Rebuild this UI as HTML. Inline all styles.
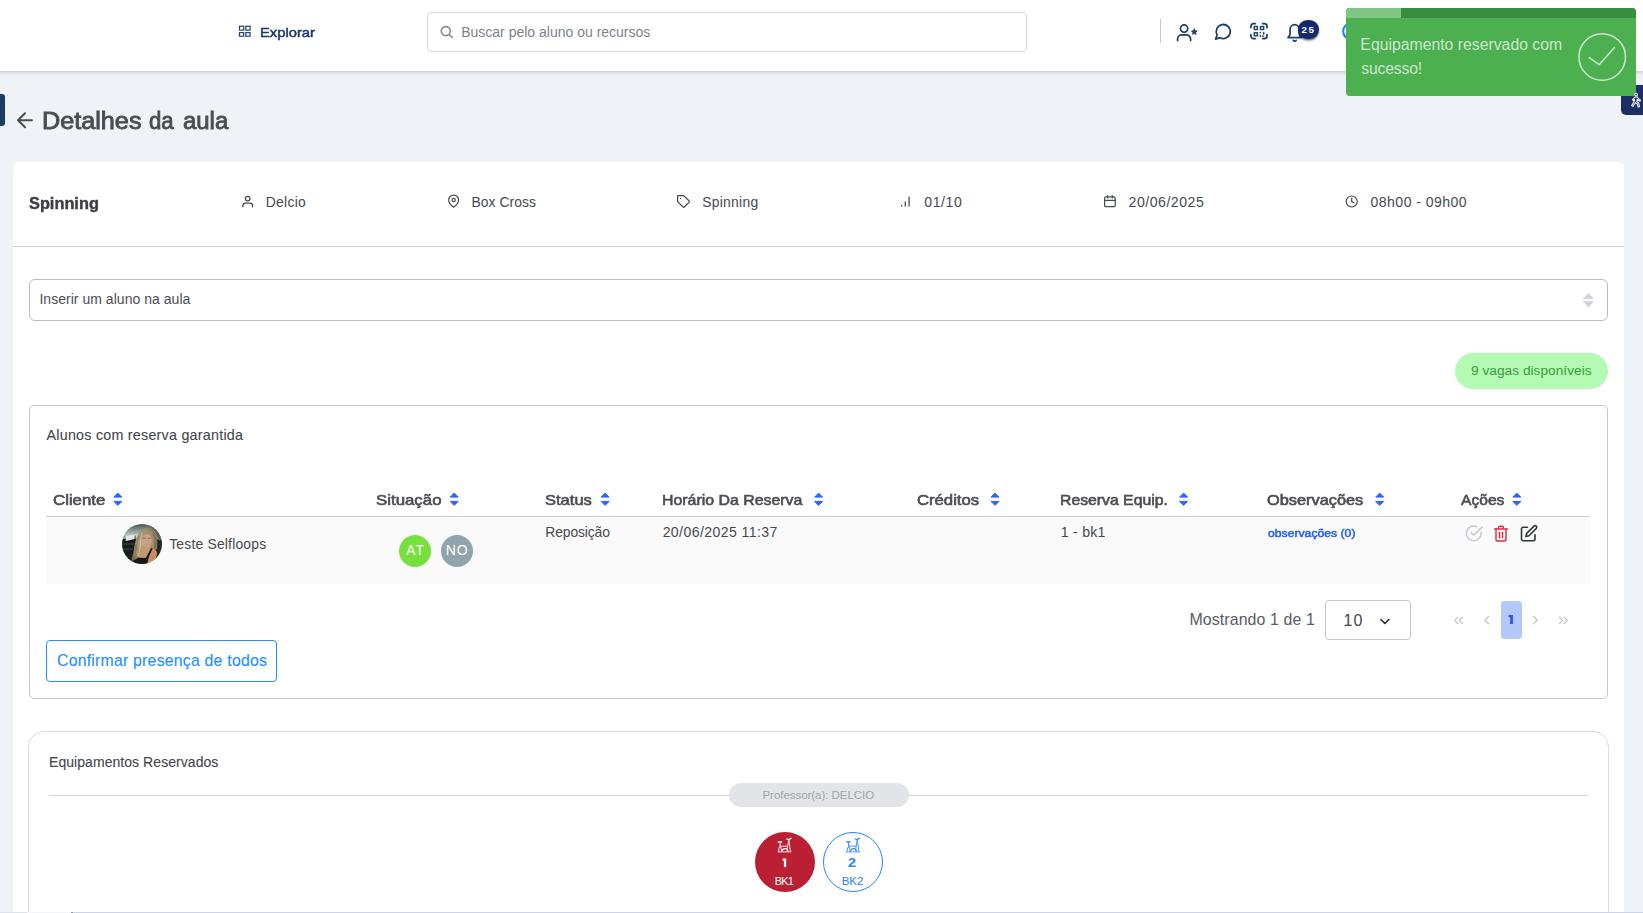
<!DOCTYPE html>
<html lang="pt-br">
<head>
<meta charset="utf-8">
<title>Detalhes da aula</title>
<style>
*{box-sizing:border-box;margin:0;padding:0}
html,body{width:1643px;height:913px;overflow:hidden}
body{background:#eff2f7;font-family:"Liberation Sans",sans-serif;color:#464a50;position:relative}
.abs{position:absolute}
.t{position:absolute;white-space:nowrap;line-height:1}
#ico{position:absolute;left:0;top:0;width:1643px;height:913px;z-index:3;pointer-events:none}
#ico2{position:absolute;left:0;top:0;width:1643px;height:913px;z-index:13;pointer-events:none}
#hdr{left:-20px;top:0;width:1683px;height:71px;background:#fff;box-shadow:0 2px 3px rgba(0,0,0,.14)}
#search{left:427px;top:12px;width:600px;height:40px;border:1px solid #d6d9dd;border-radius:4px;background:#fff}
#vdiv{left:1160px;top:19px;width:1px;height:24px;background:#c6c8cc}
#badge{left:1297.5px;top:20px;width:21.5px;height:18.5px;border-radius:9.5px;background:#15296f;box-shadow:0 1.5px 2px rgba(0,0,0,.55);z-index:4}
#toast{left:1346px;top:7.5px;width:290px;height:88.5px;background:#4caf50;border-radius:4px;overflow:hidden;z-index:11}
#tbar{left:0;top:0;width:290px;height:10px;background:#388e3c}
#tbar2{left:0;top:0;width:54.5px;height:10px;background:#81c784}
#ltab{left:0;top:93.7px;width:4.8px;height:32px;background:#1b3d63;border-radius:0 3px 3px 0}
#rtab{left:1621px;top:85px;width:24px;height:30px;background:#1c2e62;border-radius:5px 0 0 5px;z-index:10}
#card{left:13px;top:162px;width:1611px;height:760px;background:#fff;border-radius:6px}
#hr1{left:13px;top:246px;width:1611px;height:1px;background:#cdcfd3}
#sel{left:29px;top:279px;width:1579px;height:42px;border:1px solid #b8bcc8;border-radius:6px;background:#fff}
#vagas{left:1455px;top:353px;width:153px;height:36px;border-radius:18px;background:#b5fab4}
#box1{left:29px;top:405px;width:1579px;height:294px;border:1px solid #c6c8cd;border-radius:5px;background:#fff}
#thline{left:46px;top:516px;width:1544px;height:1px;background:#cbcdd1}
#row{left:46px;top:517px;width:1544px;height:67px;background:#fafafa}
.circ{position:absolute;border-radius:50%}
#ddl{left:1325px;top:600px;width:86px;height:40px;border:1px solid #c4c6ca;border-radius:4px;background:#fff}
#pg1{left:1501px;top:601px;width:21px;height:38px;border-radius:4px;background:#b4c8fa}
#btn{left:46px;top:640px;width:231px;height:42px;border:1px solid #2291fa;border-radius:4px;background:#fff}
#box2{left:28px;top:731px;width:1581px;height:230px;border:1px solid #d9dbe0;border-radius:16px;background:#fff}
#hr2{left:49px;top:795px;width:1539px;height:1px;background:#d3d5da}
#pill{left:729px;top:783px;width:180px;height:24px;border-radius:12px;background:#e3e4e7}
#botline{left:0;top:911.6px;width:1643px;height:1.4px;background:linear-gradient(90deg,#dde2ef 0,#dde2ef 27px,#f3f5fa 27px,#f3f5fa 71px,#8d96b6 71px,#8d96b6 72.5px,#cbd4e9 72.5px);z-index:20}
</style>
</head>
<body>
<div id="hdr" class="abs"></div>
<div id="search" class="abs"></div>
<div id="vdiv" class="abs"></div>
<div id="ltab" class="abs"></div>
<div id="card" class="abs"></div>
<div id="hr1" class="abs"></div>
<div id="sel" class="abs"></div>
<div id="vagas" class="abs"></div>
<div id="box1" class="abs"></div>
<div id="thline" class="abs"></div>
<div id="row" class="abs"></div>
<div class="circ" style="left:399px;top:535px;width:32px;height:32px;background:#77e03f"></div>
<div class="circ" style="left:441px;top:535px;width:32px;height:32px;background:#90a4ae"></div>
<div id="ddl" class="abs"></div>
<div id="pg1" class="abs"></div>
<div id="btn" class="abs"></div>
<div id="box2" class="abs"></div>
<div id="hr2" class="abs"></div>
<div id="pill" class="abs"></div>
<div class="circ" style="left:755px;top:832px;width:60px;height:60px;background:#ba1f33"></div>
<div class="circ" style="left:823px;top:832px;width:60px;height:60px;background:#fff;border:1.4px solid #2482ff"></div>
<div id="badge" class="abs"></div>
<div id="toast" class="abs"><div id="tbar" class="abs"></div><div id="tbar2" class="abs"></div></div>
<div id="rtab" class="abs"></div>
<div id="botline" class="abs"></div>
<span class="t" style="left:259.75px;top:25.80px;font-size:13.6px;color:#1c3a61;transform:scaleX(1.0866);transform-origin:0 0;-webkit-text-stroke:.5px #1c3a61">Explorar</span>
<span class="t" style="left:461.21px;top:25.00px;font-size:14px;color:#7d838c">Buscar pelo aluno ou recursos</span>
<span class="t" style="left:41.67px;top:110.00px;font-size:23px;color:#4b4c52;transform:scaleX(1.0959);transform-origin:0 0;-webkit-text-stroke:.85px #4b4c52">Detalhes</span>
<span class="t" style="left:148.75px;top:110.00px;font-size:23px;color:#4b4c52;transform:scaleX(0.9644);transform-origin:0 0;-webkit-text-stroke:.85px #4b4c52">da</span>
<span class="t" style="left:182.79px;top:110.00px;font-size:23px;color:#4b4c52;transform:scaleX(1.0398);transform-origin:0 0;-webkit-text-stroke:.85px #4b4c52">aula</span>
<span class="t" style="left:29.30px;top:195.90px;font-size:15.8px;color:#3d3e44;font-weight:700;transform:scaleX(1.0341);transform-origin:0 0;-webkit-text-stroke:.4px #3d3e44">Spinning</span>
<span class="t" style="left:265.81px;top:196.00px;font-size:13.9px;color:#464a50;letter-spacing:0.265px">Delcio</span>
<span class="t" style="left:471.51px;top:196.00px;font-size:13.9px;color:#464a50;letter-spacing:0.039px">Box Cross</span>
<span class="t" style="left:702.27px;top:196.00px;font-size:13.9px;color:#464a50;letter-spacing:0.259px">Spinning</span>
<span class="t" style="left:924.26px;top:195.00px;font-size:14.1px;color:#464a50;letter-spacing:0.552px">01/10</span>
<span class="t" style="left:1128.54px;top:195.00px;font-size:14.1px;color:#464a50;letter-spacing:0.518px">20/06/2025</span>
<span class="t" style="left:1370.56px;top:195.00px;font-size:14.1px;color:#464a50;letter-spacing:0.437px">08h00 - 09h00</span>
<span class="t" style="left:39.41px;top:291.90px;font-size:14px;color:#4a4d55;letter-spacing:0.031px">Inserir um aluno na aula</span>
<span class="t" style="left:1470.96px;top:364.30px;font-size:13.7px;color:#33a038;letter-spacing:0.024px">9 vagas disponíveis</span>
<span class="t" style="left:46.50px;top:428.10px;font-size:14.3px;color:#43464c;letter-spacing:0.242px;-webkit-text-stroke:.1px #43464c">Alunos com reserva garantida</span>
<span class="t" style="left:53.15px;top:492.80px;font-size:14.6px;color:#4b4d53;transform:scaleX(1.1528);transform-origin:0 0;-webkit-text-stroke:.6px #4b4d53">Cliente</span>
<span class="t" style="left:376.41px;top:492.80px;font-size:14.6px;color:#4b4d53;transform:scaleX(1.1533);transform-origin:0 0;-webkit-text-stroke:.6px #4b4d53">Situação</span>
<span class="t" style="left:545.42px;top:492.80px;font-size:14.6px;color:#4b4d53;transform:scaleX(1.1320);transform-origin:0 0;-webkit-text-stroke:.6px #4b4d53">Status</span>
<span class="t" style="left:661.90px;top:492.80px;font-size:14.6px;color:#4b4d53;transform:scaleX(1.0887);transform-origin:0 0;-webkit-text-stroke:.6px #4b4d53">Horário Da Reserva</span>
<span class="t" style="left:916.76px;top:492.80px;font-size:14.6px;color:#4b4d53;transform:scaleX(1.1427);transform-origin:0 0;-webkit-text-stroke:.6px #4b4d53">Créditos</span>
<span class="t" style="left:1060.31px;top:492.80px;font-size:14.6px;color:#4b4d53;transform:scaleX(1.0807);transform-origin:0 0;-webkit-text-stroke:.6px #4b4d53">Reserva Equip.</span>
<span class="t" style="left:1267.37px;top:492.80px;font-size:14.6px;color:#4b4d53;transform:scaleX(1.1195);transform-origin:0 0;-webkit-text-stroke:.6px #4b4d53">Observações</span>
<span class="t" style="left:1460.84px;top:492.80px;font-size:14.6px;color:#4b4d53;transform:scaleX(1.0698);transform-origin:0 0;-webkit-text-stroke:.6px #4b4d53">Ações</span>
<span class="t" style="left:169.18px;top:538.00px;font-size:13.9px;color:#464a50;letter-spacing:0.199px">Teste Selfloops</span>
<span class="t" style="left:406.35px;top:544.30px;font-size:13.8px;color:#fff;letter-spacing:0.876px">AT</span>
<span class="t" style="left:445.71px;top:543.30px;font-size:14px;color:#fff;letter-spacing:0.902px">NO</span>
<span class="t" style="left:545.31px;top:525.90px;font-size:13.9px;color:#464a50;letter-spacing:-0.129px">Reposição</span>
<span class="t" style="left:662.64px;top:524.90px;font-size:14.1px;color:#464a50;letter-spacing:0.407px">20/06/2025 11:37</span>
<span class="t" style="left:1060.82px;top:524.90px;font-size:14.1px;color:#464a50;letter-spacing:0.241px">1 - bk1</span>
<span class="t" style="left:1268.22px;top:527.80px;font-size:11.4px;color:#2460fa;transform:scaleX(1.0707);transform-origin:0 0;-webkit-text-stroke:.5px #2460fa">observações (0)</span>
<span class="t" style="left:1189.46px;top:612.30px;font-size:15.9px;color:#585c63;letter-spacing:0.109px">Mostrando 1 de 1</span>
<span class="t" style="left:1343.40px;top:613.00px;font-size:16px;color:#42454b;letter-spacing:1.202px">10</span>
<span class="t" style="left:57.01px;top:652.90px;font-size:15.8px;color:#1e90ff;letter-spacing:0.236px;-webkit-text-stroke:.12px #1e90ff">Confirmar presença de todos</span>
<span class="t" style="left:49.01px;top:755.10px;font-size:14px;color:#43464c;letter-spacing:0.056px;-webkit-text-stroke:.1px #43464c">Equipamentos Reservados</span>
<span class="t" style="left:762.50px;top:790.00px;font-size:11.5px;color:#a2a3a6;letter-spacing:-0.046px">Professor(a): DELCIO</span>
<span class="t" style="left:774.84px;top:876.10px;font-size:11px;color:#fff;letter-spacing:-0.843px">BK1</span>
<span class="t" style="left:848.34px;top:857.10px;font-size:12px;color:#2a80ff;font-weight:700;transform:scaleX(1.2333);transform-origin:0 0">2</span>
<span class="t" style="left:841.69px;top:875.10px;font-size:11.6px;color:#2a80ff;letter-spacing:-0.125px">BK2</span>
<span class="t" style="left:1301.59px;top:24.80px;font-size:9.8px;color:#fff;font-weight:700;letter-spacing:1.350px;z-index:5">25</span>
<span class="t" style="left:1360.37px;top:37.00px;font-size:15.8px;color:#cbe8cc;letter-spacing:-0.006px;z-index:12">Equipamento reservado com</span>
<span class="t" style="left:1361.35px;top:61.00px;font-size:15.8px;color:#cbe8cc;letter-spacing:-0.225px;z-index:12">sucesso!</span>
<svg id="ico" viewBox="0 0 1643 913" fill="none" stroke-linecap="round" stroke-linejoin="round">
<defs>
<clipPath id="avc"><circle cx="142" cy="544" r="20"/></clipPath>
<radialGradient id="gHair" cx="0.45" cy="0.45" r="0.65"><stop offset="0" stop-color="#b9a983"/><stop offset="0.65" stop-color="#a08e69"/><stop offset="1" stop-color="#6e5f3e"/></radialGradient>
<linearGradient id="gCeil" x1="0" y1="0" x2="0" y2="1"><stop offset="0" stop-color="#2b3232"/><stop offset="0.3" stop-color="#6e7878"/><stop offset="0.7" stop-color="#b4bdbc"/><stop offset="1" stop-color="#7d8786"/></linearGradient>
<filter id="avb" x="-10%" y="-10%" width="120%" height="120%"><feGaussianBlur stdDeviation=".55"/></filter>
</defs>
<!-- explorar grid -->
<g stroke="#234569" stroke-width="1.2" stroke-linejoin="miter">
<rect x="239.450" y="26.250" width="4.250" height="3.850"/><rect x="245.800" y="26.250" width="4.300" height="3.850"/>
<rect x="239.450" y="32.640" width="4.250" height="3.560"/><rect x="245.800" y="32.640" width="4.300" height="3.560"/>
</g>
<!-- search -->
<g stroke="#858b94" stroke-width="1.6"><circle cx="445.8" cy="31.1" r="4.5"/><path d="M449.2 34.6L452.3 37.5"/></g>
<!-- header icons -->
<g stroke="#1e4068" stroke-width="1.75">
<circle cx="1184.1" cy="28.6" r="3.65"/>
<path d="M1177.6 40.6v-1.6a4.2 4.2 0 0 1 4.2-4.2h4.6a4.2 4.2 0 0 1 4.2 4.2v1.6"/>
<path d="M1194.3 28.7l.9 1.9 2.1.3-1.5 1.5.35 2.1-1.85-1-1.85 1 .35-2.1-1.5-1.5 2.1-.3z" fill="#1e4068" stroke-width=".6"/>
<!-- chat -->
<path d="M1215.6 39.2l1.5-4.4a7 7 0 1 1 2.9 2.9z"/>
<!-- qr -->
<path d="M1250.9 27.6v-1.2a2.7 2.7 0 0 1 2.7-2.700h1.6M1262.7 23.700h1.600a2.7 2.7 0 0 1 2.7 2.7v1.2M1267 34.700v1.200a2.7 2.7 0 0 1-2.7 2.7h-1.6M1255.2 38.600h-1.600a2.7 2.7 0 0 1-2.7-2.7v-1.2"/>
<g stroke-width="1.4" stroke-linejoin="miter"><rect x="1254.3" y="26.500" width="3.1" height="3"/><rect x="1260.5" y="26.500" width="3.1" height="3"/><rect x="1254.3" y="32.800" width="3.1" height="3"/>
<path d="M1260.3 32.500v.2M1263.7 32.500v1.600M1260.3 35.400v.8M1262.2 36.100h1.500"/></g>
<!-- bell -->
<path d="M1288 37.5h13.4c-1.5-1-2.1-2.8-2.1-4.6v-3.6a4.6 4.6 0 0 0-9.2 0v3.6c0 1.8-.6 3.6-2.1 4.6z"/>
<path d="M1293.3 40.3a1.6 1.6 0 0 0 2.8 0"/>
</g>
<!-- partial blue circle behind toast -->
<circle cx="1351.500" cy="31.400" r="8.300" stroke="#1e88e5" stroke-width="2.200"/>
<!-- back arrow -->
<path d="M31.900 120.200H18M25 113.200l-7 7 7 7" stroke="#4b4c52" stroke-width="1.950"/>
<!-- row1 icons -->
<g stroke="#464a50" stroke-width="1.2">
<circle cx="247.7" cy="198.6" r="2.3"/><path d="M242.9 206.8v-1a2.6 2.6 0 0 1 2.6-2.6h4.4a2.6 2.6 0 0 1 2.6 2.6v1"/>
<g transform="translate(447.05 194.55) scale(.55)" stroke-width="2.2"><path d="M21 10c0 7-9 13-9 13s-9-6-9-13a9 9 0 0 1 18 0z"/><circle cx="12" cy="10" r="3"/></g>
<g transform="translate(676.4 194.4) scale(.61 .6)" stroke-width="2"><path d="M20.59 13.41l-7.17 7.17a2 2 0 0 1-2.83 0L2 12V2h10l8.59 8.59a2 2 0 0 1 0 2.82z"/><path d="M7 7h.01"/></g>
<path d="M901.7 205v1.5M905.3 201.4v5.1M909.1 196.8v9.7" stroke-linecap="butt" stroke-width="1.3"/>
<rect x="1104.6" y="196.9" width="10.6" height="9.8" rx="1.3"/><path d="M1107.6 195.6v2.4M1112.3 195.6v2.4M1104.6 200.4h10.6"/>
<circle cx="1351.7" cy="201.5" r="5.5"/><path d="M1351.7 198.1v3.5l2.3 1.2"/>
</g>
<!-- select caret -->
<path d="M1583.3 298.8h10.4l-5.2-5.6zM1583.3 301.3h10.4l-5.2 5.6z" fill="#d0d3dc" stroke="#d0d3dc" stroke-width=".5"/>
<g fill="#2a63ff" stroke="#2a63ff" stroke-width="1"><path d="M114.2 497.100h7.600l-3.800-3.800zM114.2 501.400h7.600l-3.800 3.800z"/><path d="M450.6 497.100h7.600l-3.800-3.800zM450.6 501.400h7.600l-3.800 3.800z"/><path d="M601.5 497.100h7.600l-3.800-3.800zM601.5 501.400h7.600l-3.800 3.800z"/><path d="M815.0 497.100h7.600l-3.800-3.800zM815.0 501.400h7.600l-3.800 3.800z"/><path d="M991.4 497.100h7.600l-3.800-3.800zM991.4 501.400h7.600l-3.800 3.800z"/><path d="M1180.0 497.100h7.600l-3.800-3.800zM1180.0 501.400h7.600l-3.800 3.800z"/><path d="M1376.1 497.100h7.600l-3.800-3.800zM1376.1 501.400h7.600l-3.800 3.800z"/><path d="M1513.2 497.100h7.600l-3.800-3.800zM1513.2 501.400h7.600l-3.800 3.800z"/></g>
<g clip-path="url(#avc)"><g transform="translate(122 524)" filter="url(#avb)">
<rect x="-2" y="-2" width="44" height="44" fill="#171d1f"/>
<path d="M-2 -2h44v16l-6 2-8-8-12 2-4 3-14 3z" fill="url(#gCeil)"/>
<path d="M26 0h16v14l-5 3-4-9z" fill="#59625f"/>
<path d="M3.800 11.800l8.600-1.300.3 4.600-9 2z" fill="#dfe6e5"/>
<path d="M13.500 10.500l5-1-.5 4-4.500 1.500z" fill="#c9d2d1"/>
<path d="M0 19h12v1.800h-12zM0 24.500h11v1.500h-11z" fill="#3a3d34" opacity=".8"/>
<path d="M33 18h9v20h-12z" fill="#20272a"/>
<!-- hair -->
<path d="M24.900 4.200c3-.3 5.400.9 6.800 2.900 1.800 2 2.700 4.200 2.900 5.700.7 2.300 1 4.600.8 6.800.1 2-.1 3.700-.3 5.200l-2.200 1.800-8 8-9 3-6.700-.9c.5-1.600.8-2.800.9-4 1-2.300 1.500-4.500 1.700-6.800.5-2.100.8-4.200 1.100-6.300.4-2 1-3.900 1.700-5.700.7-2.100 1.700-4 2.900-5.700 2-2.500 4.600-3.800 7.400-4z" fill="url(#gHair)"/>
<path d="M17 12c-1.500 4-2 8-2.500 12-.5 4-1.800 8-3.500 12" stroke="#7a6846" stroke-width="1.200" opacity=".55"/>
<path d="M20 9c-1.200 3-1.500 6-1.500 10s-.5 8-2.500 13" stroke="#ded3b0" stroke-width="1.100" opacity=".6"/>
<path d="M31 9c1.500 3 2 6 2 9s0 5-.5 7" stroke="#6f5f40" stroke-width="1.300" opacity=".5"/>
<path d="M14 20c-1 3-1 7-3.500 12M22 24c-1 2-1.500 5-3.500 8M33.500 13c.8 3 .8 7 .3 10" stroke="#6a5a3c" stroke-width="1" opacity=".5"/>
<!-- neck/chest -->
<path d="M20.500 22l8.500 1 .8 7-5 4.500h-8.500z" fill="#c5976f"/>
<!-- shoulder -->
<path d="M28.500 25.500c2.500-1.700 5.500-.5 6.600 3.800l-1.800 8.500-9 3 .5-6z" fill="#c98d5f"/>
<!-- face -->
<ellipse cx="24.900" cy="16.700" rx="4.900" ry="6.700" fill="#c9a183"/>
<path d="M21 14.200h2.800M26.300 14.200h2.600" stroke="#6b5442" stroke-width=".9" opacity=".7"/>
<path d="M24 20.300h2.200" stroke="#c98a8e" stroke-width="1"/>
<path d="M20 11c1.500-2.500 7-3 9.500-.5-2-1-6.500-1-9.500.5z" fill="#a08a62"/>
<!-- top + strap -->
<path d="M11.500 36.500l4.500-2.800 7.800.2 5.500-10.200 1.300.9-3.800 8.300-1.600 7.100h-13z" fill="#15171c"/>
</g></g>
<g stroke-width="1.5">
<path d="M1481.100 532.100v1.300a7.400 7.400 0 1 1-4.400-6.800" stroke="#c3c9d3"/>
<path d="M1482 527.100l-8.200 8.200-2.700-2.700" stroke="#c3c9d3"/>
<g stroke="#e0263c"><path d="M1494.600 529h12.800M1498.600 528.800v-1.300a1.200 1.200 0 0 1 1.200-1.200h2.400a1.200 1.200 0 0 1 1.200 1.200v1.300M1496 529.200v10.300a1.500 1.500 0 0 0 1.500 1.500h7a1.500 1.500 0 0 0 1.500-1.500v-10.300M1499.500 532.300v5.400M1502.500 532.300v5.400" stroke-width="1.4"/></g>
<g stroke="#33383f" stroke-width="1.6"><path d="M1527.500 527.300h-4.300a1.700 1.700 0 0 0-1.700 1.700v10.100a1.700 1.700 0 0 0 1.700 1.700h10.100a1.700 1.700 0 0 0 1.700-1.700v-4.300"/><path d="M1534 526.100a1.600 1.600 0 0 1 2.300 2.300l-7.300 7.300-3.100.8.800-3.100z"/></g>
</g>
<path d="M1388.900 619.500l-4 4-4-4" stroke="#26282c" stroke-width="1.6"/>
<g stroke="#c0c4cb" stroke-width="1.250">
<path d="M1457.700 617.300l-3.100 3.100 3.100 3.100M1462.500 617.300l-3.100 3.100 3.100 3.100"/>
<path d="M1488.700 616.500l-3.900 3.700 3.900 3.700"/>
<path d="M1533.400 616.500l3.900 3.700-3.900 3.700"/>
<path d="M1559.500 617.300l3.100 3.100-3.100 3.100M1564.300 617.300l3.100 3.100-3.100 3.100"/>
</g>
<path d="M1508.600 615h4.300v9h-2.700v-6.700h-1.600z" fill="#2554f0"/>
<path d="M782.600 858.500h3.600v8.600h-2.300v-6.400h-1.300z" fill="#fff"/>
<g transform="translate(777.4 837.7)" stroke="#fff" stroke-width=".9">
<path d="M.8 4.300h3.400" stroke-width="1.300"/><path d="M9.300 1.300l2 .6 2.300-1.300" stroke-width="1.300"/>
<path d="M2.700 5v4.800M2.700 8.400h7.300M11.300 2.300l-1.700 10.500M11.500 2.300l1.500 11.300M1.700 10l-.6 3.800M3.600 10l.4 2.600"/>
<path d="M4.600 13.600a3.200 3.200 0 0 1 6.200-.4" stroke-width="1.100"/><path d="M.6 14.200h13" stroke-width=".9"/>
</g><g transform="translate(845.9 837.7)" stroke="#2f86ff" stroke-width=".9">
<path d="M.8 4.300h3.400" stroke-width="1.300"/><path d="M9.300 1.300l2 .6 2.300-1.300" stroke-width="1.300"/>
<path d="M2.700 5v4.800M2.700 8.400h7.300M11.300 2.300l-1.700 10.500M11.500 2.300l1.500 11.300M1.700 10l-.6 3.800M3.600 10l.4 2.600"/>
<path d="M4.600 13.600a3.200 3.200 0 0 1 6.200-.4" stroke-width="1.100"/><path d="M.6 14.200h13" stroke-width=".9"/>
</g>
</svg>

<svg id="ico2" viewBox="0 0 1643 913" fill="none" stroke-linecap="round" stroke-linejoin="round">
<circle cx="1602.200" cy="57" r="23.300" stroke="#c9e6ca" stroke-width="1.600"/>
<path d="M1589.300 57.700l9.800 7 15.400-17.200" stroke="#c9e6ca" stroke-width="1.600"/>
<!-- accessibility walking figure -->
<g stroke="#fff" stroke-width="1.250" transform="translate(1635.700 96.100) scale(.82) translate(-1636 -96.100)">
<circle cx="1636.500" cy="94.300" r="1.700"/>
<path d="M1634.600 97.500l-2.600 3.200 1.200 1 1.400-1.600-.6 3-3 4.600 1.600 1 3.200-4.800 2.300 2 .8 3.600 1.800-.4-1-4.300-2.300-2.300.5-2.400 1.300 1.500 2.200.7.400-1.500-1.700-.6-2.300-3.300z" fill="#1c2e62"/>
</g>
</svg>

</body>
</html>
